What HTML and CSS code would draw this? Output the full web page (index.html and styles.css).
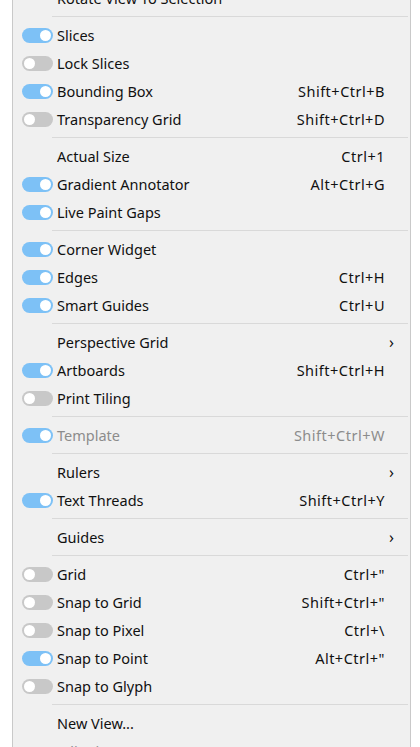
FILE: index.html
```html
<!DOCTYPE html>
<html>
<head>
<meta charset="utf-8">
<link rel="stylesheet" href="styles.css">
</head>
<body>
<div class="menu">
  <div class="row"><span class="tg"></span><span class="label">Rotate View To Selection</span><span class="key"></span></div>
  <div class="sep"></div>
  <div class="row"><span class="tg on"></span><span class="label">Slices</span><span class="key"></span></div>
  <div class="row"><span class="tg off"></span><span class="label">Lock Slices</span><span class="key"></span></div>
  <div class="row"><span class="tg on"></span><span class="label">Bounding Box</span><span class="key">Shift+Ctrl+B</span></div>
  <div class="row"><span class="tg off"></span><span class="label">Transparency Grid</span><span class="key">Shift+Ctrl+D</span></div>
  <div class="sep"></div>
  <div class="row"><span class="tg"></span><span class="label">Actual Size</span><span class="key">Ctrl+1</span></div>
  <div class="row"><span class="tg on"></span><span class="label">Gradient Annotator</span><span class="key">Alt+Ctrl+G</span></div>
  <div class="row"><span class="tg on"></span><span class="label">Live Paint Gaps</span><span class="key"></span></div>
  <div class="sep"></div>
  <div class="row"><span class="tg on"></span><span class="label">Corner Widget</span><span class="key"></span></div>
  <div class="row"><span class="tg on"></span><span class="label">Edges</span><span class="key">Ctrl+H</span></div>
  <div class="row"><span class="tg on"></span><span class="label">Smart Guides</span><span class="key">Ctrl+U</span></div>
  <div class="sep"></div>
  <div class="row sub"><span class="tg"></span><span class="label">Perspective Grid</span><span class="arrow">&#x203A;</span></div>
  <div class="row"><span class="tg on"></span><span class="label">Artboards</span><span class="key">Shift+Ctrl+H</span></div>
  <div class="row"><span class="tg off"></span><span class="label">Print Tiling</span><span class="key"></span></div>
  <div class="sep"></div>
  <div class="row disabled"><span class="tg on"></span><span class="label">Template</span><span class="key">Shift+Ctrl+W</span></div>
  <div class="sep"></div>
  <div class="row sub"><span class="tg"></span><span class="label">Rulers</span><span class="arrow">&#x203A;</span></div>
  <div class="row"><span class="tg on"></span><span class="label">Text Threads</span><span class="key">Shift+Ctrl+Y</span></div>
  <div class="sep"></div>
  <div class="row sub"><span class="tg"></span><span class="label">Guides</span><span class="arrow">&#x203A;</span></div>
  <div class="sep"></div>
  <div class="row"><span class="tg off"></span><span class="label">Grid</span><span class="key">Ctrl+"</span></div>
  <div class="row"><span class="tg off"></span><span class="label">Snap to Grid</span><span class="key">Shift+Ctrl+"</span></div>
  <div class="row"><span class="tg off"></span><span class="label">Snap to Pixel</span><span class="key">Ctrl+\</span></div>
  <div class="row"><span class="tg on"></span><span class="label">Snap to Point</span><span class="key">Alt+Ctrl+"</span></div>
  <div class="row"><span class="tg off"></span><span class="label">Snap to Glyph</span><span class="key"></span></div>
  <div class="sep"></div>
  <div class="row"><span class="tg"></span><span class="label">New View...</span><span class="key"></span></div>
  <div class="row disabled"><span class="tg"></span><span class="label">Edit Views...</span><span class="key"></span></div>
</div>
</body>
</html>
```

FILE: styles.css
```css
html, body {
  margin: 0;
  padding: 0;
  background: #ffffff;
  overflow: hidden;
}

body {
  font-family: "Noto Sans", "Open Sans", sans-serif;
  font-size: 14.5px;
  color: #111111;
}

.menu {
  margin-left: 12px;
  width: 397px;
  margin-top: -16px;
  background: #f0f0f0;
  border-left: 1px solid #c9c9c9;
  border-right: 1px solid #c9c9c9;
}

.row {
  height: 28px;
  display: flex;
  align-items: center;
}

.tg {
  flex: 0 0 auto;
  width: 31px;
  height: 15px;
  margin-left: 9px;
  margin-right: 4px;
  border-radius: 8px;
  position: relative;
  box-sizing: border-box;
}

.tg.on { background: #7dc1f6; }
.tg.off { background: #c8c8c8; }

.tg.on::after,
.tg.off::after {
  content: "";
  position: absolute;
  top: 2px;
  width: 11px;
  height: 11px;
  border-radius: 50%;
  background: #ffffff;
}

.tg.on::after { right: 2px; }
.tg.off::after { left: 2px; }

.label {
  flex: 1 1 auto;
  white-space: nowrap;
}

.key {
  flex: 0 0 auto;
  margin-right: 25px;
  white-space: nowrap;
  letter-spacing: 0.5px;
}

.arrow {
  flex: 0 0 auto;
  margin-right: 16px;
  font-size: 16px;
  line-height: 1;
}

.disabled { color: #8c8c8c; }

.sep {
  height: 1px;
  background: #d9d9d9;
  margin: 4px 2px 4px 39px;
}
```
